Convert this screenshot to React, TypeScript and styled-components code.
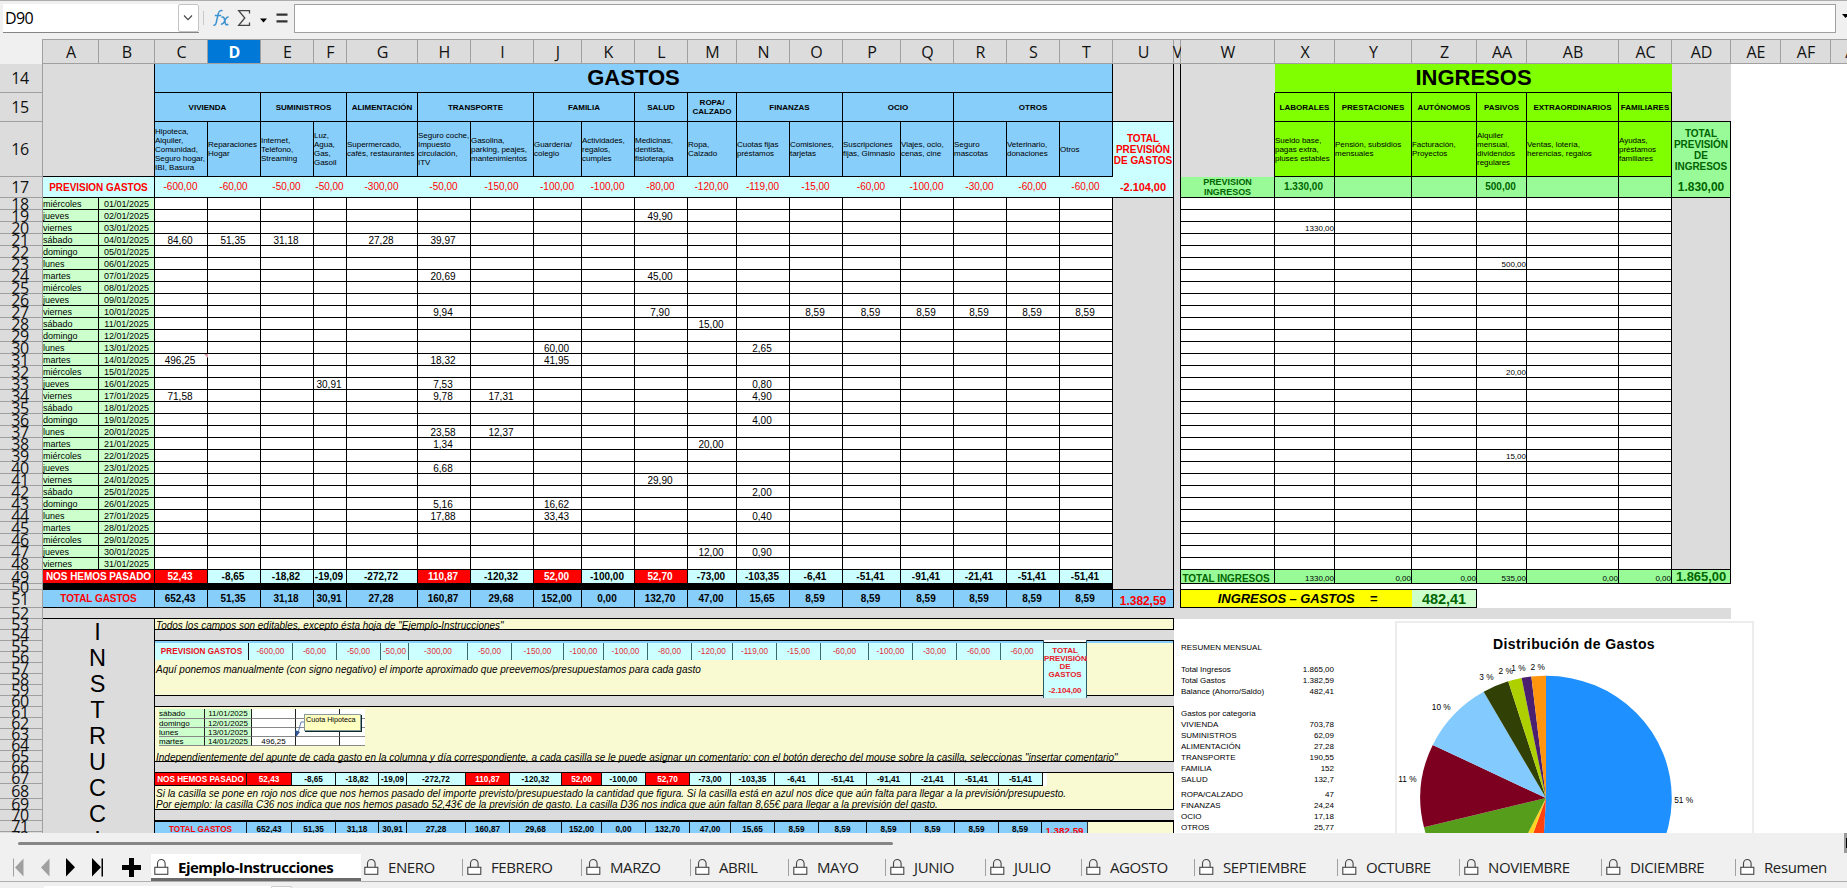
import React from 'react';
import styled, { createGlobalStyle, css } from 'styled-components';

const GlobalStyle = createGlobalStyle`
  * { box-sizing: border-box; }
  html, body { margin: 0; padding: 0; overflow: hidden; }
  body { background: #f0f0f0; font-family: "Liberation Sans", Arial, sans-serif; color: #000; }
`;

const UI_FONT = '"Open Sans", "Noto Sans", sans-serif';
const BLUE = '#87cefa';
const CYAN = '#ccffff';
const GRAY = '#dcdcdc';
const LIME = '#7fff00';
const MINT = '#98fb98';
const PALE_GREEN = '#ccffcc';
const RED = '#ff0000';
const DARK_GREEN = '#006400';
const NOTE = '#fafad2';

/* ---------- data ---------- */

const COLS: [string, number][] = [
  ['A', 56], ['B', 56], ['C', 53], ['D', 53], ['E', 53], ['F', 33], ['G', 71], ['H', 53], ['I', 63],
  ['J', 48], ['K', 53], ['L', 53], ['M', 49], ['N', 53], ['O', 53], ['P', 58], ['Q', 53], ['R', 53],
  ['S', 53], ['T', 53], ['U', 61], ['V', 7], ['W', 94], ['X', 60], ['Y', 77], ['Z', 65], ['AA', 50],
  ['AB', 92], ['AC', 53], ['AD', 59], ['AE', 50], ['AF', 50], ['AG', 50],
];

const ROW_HEIGHTS: [number, number][] = [
  [14, 29], [15, 29], [16, 55], [17, 21],
  ...Array.from({ length: 31 }, (_, i): [number, number] => [18 + i, 12]),
  [49, 14], [50, 6], [51, 18],
  ...Array.from({ length: 16 }, (_, i): [number, number] => [52 + i, 11]),
  [68, 15], [69, 11], [70, 11], [71, 11], [72, 11],
];

const GRID_COLUMNS = COLS.slice(0, 30).map(([, w]) => `${w}px`).join(' ');

const GROUPS: [string, number][] = [
  ['VIVIENDA', 2], ['SUMINISTROS', 2], ['ALIMENTACIÓN', 1], ['TRANSPORTE', 2], ['FAMILIA', 2], ['SALUD', 1],
  ['ROPA/\nCALZADO', 1], ['FINANZAS', 2], ['OCIO', 2], ['OTROS', 3],
];

const CONCEPTS = [
  'Hipoteca,\nAlquiler,\nComunidad,\nSeguro hogar,\nIBI, Basura', 'Reparaciones\nHogar', 'Internet,\nTeléfono,\nStreaming',
  'Luz,\nAgua,\nGas,\nGasoil', 'Supermercado,\ncafés, restaurantes', 'Seguro coche,\nImpuesto\ncirculación,\nITV',
  'Gasolina,\nparking, peajes,\nmantenimientos', 'Guardería/\ncolegio', 'Actividades,\nregalos,\ncumples',
  'Medicinas,\ndentista,\nfisioterapia', 'Ropa,\nCalzado', 'Cuotas fijas\npréstamos', 'Comisiones,\ntarjetas',
  'Suscripciones\nfijas, Gimnasio', 'Viajes, ocio,\ncenas, cine', 'Seguro\nmascotas', 'Veterinario,\ndonaciones', 'Otros',
];

const FORECAST = ['-600,00', '-60,00', '-50,00', '-50,00', '-300,00', '-50,00', '-150,00', '-100,00', '-100,00', '-80,00',
  '-120,00', '-119,00', '-15,00', '-60,00', '-100,00', '-30,00', '-60,00', '-60,00'];
const DEVIATION = ['52,43', '-8,65', '-18,82', '-19,09', '-272,72', '110,87', '-120,32', '52,00', '-100,00', '52,70',
  '-73,00', '-103,35', '-6,41', '-51,41', '-91,41', '-21,41', '-51,41', '-51,41'];
const TOTALS = ['652,43', '51,35', '31,18', '30,91', '27,28', '160,87', '29,68', '152,00', '0,00', '132,70', '47,00',
  '15,65', '8,59', '8,59', '8,59', '8,59', '8,59', '8,59'];

const WEEKDAYS = ['miércoles', 'jueves', 'viernes', 'sábado', 'domingo', 'lunes', 'martes'];
const EXPENSE_COLS = COLS.slice(2, 20).map(([n]) => n);
const INCOME_COLS = COLS.slice(22, 29).map(([n]) => n);

const ENTRIES: Record<number, Record<string, string>> = {
  19: { L: '49,90' },
  20: { X: '1330,00' },
  21: { C: '84,60', D: '51,35', E: '31,18', G: '27,28', H: '39,97' },
  23: { AA: '500,00' },
  24: { H: '20,69', L: '45,00' },
  27: { H: '9,94', L: '7,90', O: '8,59', P: '8,59', Q: '8,59', R: '8,59', S: '8,59', T: '8,59' },
  28: { M: '15,00' },
  30: { J: '60,00', N: '2,65' },
  31: { C: '496,25', H: '18,32', J: '41,95' },
  32: { AA: '20,00' },
  33: { F: '30,91', H: '7,53', N: '0,80' },
  34: { C: '71,58', H: '9,78', I: '17,31', N: '4,90' },
  36: { N: '4,00' },
  37: { H: '23,58', I: '12,37' },
  38: { H: '1,34', M: '20,00' },
  39: { AA: '15,00' },
  40: { H: '6,68' },
  41: { L: '29,90' },
  42: { N: '2,00' },
  43: { H: '5,16', J: '16,62' },
  44: { H: '17,88', J: '33,43', N: '0,40' },
  47: { M: '12,00', N: '0,90' },
};

const INCOME_GROUPS = ['LABORALES', 'PRESTACIONES', 'AUTÓNOMOS', 'PASIVOS', 'EXTRAORDINARIOS', 'FAMILIARES'];
const INCOME_CONCEPTS = ['Sueldo base,\npagas extra,\npluses estables', 'Pensión, subsidios\nmensuales', 'Facturación,\nProyectos',
  'Alquiler\nmensual,\ndividendos\nregulares', 'Ventas, lotería,\nherencias, regalos', 'Ayudas,\npréstamos\nfamiliares'];
const INCOME_FORECAST = ['1.330,00', '', '', '500,00', '', ''];
const INCOME_TOTALS = ['1330,00', '0,00', '0,00', '535,00', '0,00', '0,00'];

const SUMMARY: [string, string, number?][] = [
  ['', ''], ['', ''], ['RESUMEN MENSUAL', ''], ['', ''], ['Total Ingresos', '1.865,00'], ['Total Gastos', '1.382,59'],
  ['Balance (Ahorro/Saldo)', '482,41'], ['', ''], ['Gastos por categoría', ''], ['VIVIENDA', '703,78'],
  ['SUMINISTROS', '62,09'], ['ALIMENTACIÓN', '27,28'], ['TRANSPORTE', '190,55'], ['FAMILIA', '152'], ['SALUD', '132,7'],
  ['ROPA/CALZADO', '47', 15], ['FINANZAS', '24,24'], ['OCIO', '17,18'], ['OTROS', '25,77'],
];

const SLICES: [number, string][] = [
  [703.78, '#1e90ff'], [62.09, '#ff420e'], [27.28, '#ffd320'], [190.55, '#579d1c'], [152, '#7e0021'],
  [132.7, '#83caff'], [47, '#314004'], [24.24, '#aecf00'], [17.18, '#4b1f6f'], [25.77, '#ff950e'],
];

const TABS: [string, number][] = [
  ['Ejemplo-Instrucciones', 210], ['ENERO', 101], ['FEBRERO', 119], ['MARZO', 109], ['ABRIL', 98], ['MAYO', 97],
  ['JUNIO', 100], ['JULIO', 96], ['AGOSTO', 113], ['SEPTIEMBRE', 143], ['OCTUBRE', 122], ['NOVIEMBRE', 142],
  ['DICIEMBRE', 134], ['Resumen', 112],
];

/* ---------- formula bar ---------- */

const Window = styled.div`
  width: 1847px;
  height: 888px;
  display: flex;
  flex-direction: column;
  overflow: hidden;
  background: #f0f0f0;
`;

const FormulaBar = styled.div`
  height: 39px;
  flex: none;
  display: flex;
  align-items: flex-start;
  border-top: 1px solid #adadad;
  padding: 3px 0 0 3px;
  font-family: ${UI_FONT};
`;

const NameBox = styled.div`
  width: 196px;
  height: 29px;
  display: flex;
  justify-content: space-between;
  background: #fff;
  border-bottom: 1px solid #868686;
  font-size: 16px;
  line-height: 29px;
  padding-left: 2px;
  letter-spacing: -0.6px;
`;

const DropButton = styled.div`
  width: 21px;
  height: 28px;
  border: 1px solid #c4c4c4;
  border-radius: 2px;
  display: flex;
  align-items: center;
  justify-content: center;
`;

const Separator = styled.div`
  width: 1px;
  height: 14px;
  margin: 7px 9px 0 4px;
  background: #c8c8c8;
`;

const Tools = styled.svg`
  width: 82px;
  height: 29px;
  flex: none;
`;

const FormulaInput = styled.div`
  width: 1544px;
  height: 29px;
  margin-left: -1px;
  background: #fff;
  border: 1px solid #a0a0a0;
`;

const MoreCaret = styled.svg`
  margin: 10px 0 0 6px;
  flex: none;
`;

/* ---------- headers ---------- */

const ColumnHeaders = styled.div`
  height: 25px;
  flex: none;
  display: flex;
  padding-left: 42px;
`;

const ColumnHeader = styled.div<{ $w: number; $active?: boolean }>`
  width: ${p => p.$w}px;
  flex: none;
  display: flex;
  align-items: center;
  justify-content: center;
  border: solid #a0a0a0;
  border-width: 1px 1px 1px 0;
  background: ${p => (p.$active ? '#0078d7' : GRAY)};
  color: ${p => (p.$active ? '#fff' : '#111')};
  font: ${p => (p.$active ? 700 : 400)} 16px/22px ${UI_FONT};
  padding: 1px 0 0 1px;
  &:first-child { border-left-width: 1px; }
`;

const Sheet = styled.div`
  height: 769px;
  flex: none;
  display: flex;
  overflow: hidden;
  background: #fff;
`;

const RowHeaders = styled.div`
  width: 43px;
  flex: none;
  background: ${GRAY};
  border-right: 1px solid #a0a0a0;
`;

const RowHeader = styled.div<{ $h: number }>`
  height: ${p => p.$h}px;
  display: flex;
  align-items: center;
  justify-content: center;
  border-bottom: 1px solid #a0a0a0;
  padding-right: 2px;
  font: 16px/16px ${UI_FONT};
  letter-spacing: -0.5px;
  color: #111;
`;

const Content = styled.div`
  display: flex;
  flex-direction: column;
  flex: none;
`;

/* ---------- grid ---------- */

const Grid = styled.div`
  display: grid;
  grid-template-columns: ${GRID_COLUMNS};
  grid-template-rows: 29px 29px 55px 21px repeat(31, 12px) 14px 6px 18px 11px;
  flex: none;
`;

interface CellProps {
  $bg?: string;
  $cols?: number;
  $rows?: number;
  $lines?: 'both' | 'right' | 'bottom' | 'none';
}

const LINES = { both: '0 1px 1px 0', right: '0 1px 0 0', bottom: '0 0 1px 0', none: '0' };

const Cell = styled.div<CellProps>`
  grid-column: span ${p => p.$cols ?? 1};
  grid-row: span ${p => p.$rows ?? 1};
  min-width: 0;
  min-height: 0;
  background: ${p => p.$bg ?? '#fff'};
  border: solid #000;
  border-width: ${p => LINES[p.$lines ?? 'both']};
  display: flex;
  align-items: center;
  justify-content: center;
  white-space: pre;
  text-align: center;
  position: relative;
`;

const Title = styled(Cell)`
  font-size: 22px;
  font-weight: 700;
`;

const GroupCell = styled(Cell)`
  font-size: 8px;
  font-weight: 700;
  line-height: 9px;
`;

const ConceptCell = styled(Cell)`
  justify-content: flex-start;
  text-align: left;
  font-size: 8px;
  line-height: 9px;
  letter-spacing: -0.03px;
`;

const LabelCell = styled(Cell)<{ $color?: string; $size?: number; $lh?: number }>`
  font-size: ${p => p.$size ?? 10}px;
  font-weight: 700;
  line-height: ${p => p.$lh ?? 11}px;
  letter-spacing: -0.05px;
  color: ${p => p.$color ?? '#000'};
`;

const AmountCell = styled(Cell)<{ $color?: string; $bold?: boolean; $low?: boolean }>`
  font-size: 10px;
  line-height: 10px;
  padding-right: 2px;
  font-weight: ${p => (p.$bold ? 700 : 400)};
  color: ${p => p.$color ?? '#000'};
  ${p => p.$low && css`padding-top: 2px;`}
`;

const DayCell = styled(Cell)<{ $left?: boolean }>`
  font-size: 9px;
  line-height: 9px;
  padding-top: 2px;
  justify-content: ${p => (p.$left ? 'flex-start' : 'center')};
`;

const IncomeCell = styled(Cell)`
  justify-content: flex-end;
  align-items: flex-end;
  font-size: 8px;
  line-height: 8px;
`;

const BalanceCell = styled(LabelCell)`
  font-style: italic;
  gap: 15px;
  padding-left: 2px;
`;

const CommentMark = styled.i`
  position: absolute;
  right: -1px;
  top: 0;
  border: solid transparent;
  border-width: 0 4px 4px 0;
  border-right-color: #d59aa5;
`;

const BottomText = styled.span`
  padding-top: 5px;
`;

function DayRow({ row }: { row: number }) {
  const i = row - 18;
  const entries = ENTRIES[row] ?? {};
  return (
    <>
      <DayCell $bg={PALE_GREEN} $left>{WEEKDAYS[i % 7]}</DayCell>
      <DayCell $bg={PALE_GREEN}>{String(i + 1).padStart(2, '0')}/01/2025</DayCell>
      {EXPENSE_COLS.map(c => (
        <AmountCell key={c} $low>
          {entries[c]}
          {row === 31 && c === 'C' && <CommentMark />}
        </AmountCell>
      ))}
      {row === 18 && <Cell $bg={GRAY} $rows={33} />}
      {INCOME_COLS.map(c => <IncomeCell key={c}>{entries[c]}</IncomeCell>)}
      {row === 18 && <Cell $bg={GRAY} $rows={31} />}
    </>
  );
}

function MainGrid() {
  return (
    <Grid>
      <Cell $bg={GRAY} $cols={2} $rows={3} />
      <Title $bg={BLUE} $cols={18}>GASTOS</Title>
      <Cell $bg={GRAY} $rows={2} />
      <Cell $bg={GRAY} $rows={38} $lines="right" />
      <Cell $bg={GRAY} $lines="none" />
      <Title $bg={LIME} $cols={6} $lines="bottom">INGRESOS</Title>
      <Cell $bg={GRAY} $rows={2} $lines="bottom" />

      {GROUPS.map(([name, span]) => <GroupCell key={name} $bg={BLUE} $cols={span}>{name}</GroupCell>)}
      <Cell $bg={GRAY} $rows={2} $lines="right" />
      {INCOME_GROUPS.map(name => <GroupCell key={name} $bg={LIME}>{name}</GroupCell>)}

      {CONCEPTS.map(text => <ConceptCell key={text} $bg={BLUE}>{text}</ConceptCell>)}
      <LabelCell $bg={CYAN} $color={RED} $lines="right">{'TOTAL\nPREVISIÓN\nDE GASTOS'}</LabelCell>
      {INCOME_CONCEPTS.map(text => <ConceptCell key={text} $bg={LIME}>{text}</ConceptCell>)}
      <LabelCell $bg={MINT} $color={DARK_GREEN} $lines="right">{'TOTAL\nPREVISIÓN\nDE\nINGRESOS'}</LabelCell>

      <LabelCell $bg={CYAN} $cols={2} $color={RED}>PREVISION GASTOS</LabelCell>
      {FORECAST.map((v, i) => <AmountCell key={i} $bg={CYAN} $color={RED} $lines="bottom">{v}</AmountCell>)}
      <LabelCell $bg={CYAN} $color={RED} $size={11}>-2.104,00</LabelCell>
      <LabelCell $bg={MINT} $color={DARK_GREEN} $size={9} $lh={10}>{'PREVISION\nINGRESOS'}</LabelCell>
      {INCOME_FORECAST.map((v, i) => <AmountCell key={i} $bg={MINT} $color={DARK_GREEN} $bold>{v}</AmountCell>)}
      <LabelCell $bg={MINT} $color={DARK_GREEN} $size={12}>1.830,00</LabelCell>

      {Array.from({ length: 31 }, (_, i) => <DayRow key={i} row={18 + i} />)}

      <LabelCell $bg={RED} $cols={2} $color="#fff">NOS HEMOS PASADO</LabelCell>
      {DEVIATION.map((v, i) => (
        <AmountCell key={i} $bg={v[0] === '-' ? CYAN : RED} $color={v[0] === '-' ? '#000' : '#fff'} $bold>{v}</AmountCell>
      ))}
      <LabelCell $bg={MINT} $color={DARK_GREEN}><TotalIncomeText>TOTAL INGRESOS</TotalIncomeText></LabelCell>
      {INCOME_TOTALS.map((v, i) => <IncomeCell key={i} $bg={MINT}>{v}</IncomeCell>)}
      <LabelCell $bg={MINT} $color={DARK_GREEN} $size={13}>1.865,00</LabelCell>

      <Cell $bg="#000" $cols={20} />
      <Cell $cols={4} $lines="bottom" />
      <Cell $cols={4} $lines="none" />

      <LabelCell $bg={BLUE} $cols={2} $color={RED}>TOTAL GASTOS</LabelCell>
      {TOTALS.map((v, i) => <AmountCell key={i} $bg={BLUE} $bold>{v}</AmountCell>)}
      <LabelCell $bg={BLUE} $color={RED} $size={12} $lh={12}><BottomText>1.382,59</BottomText></LabelCell>
      <BalanceCell $bg="#ffff00" $cols={3} $size={13} $lh={16} $lines="bottom">
        <span>INGRESOS – GASTOS</span><span>=</span>
      </BalanceCell>
      <LabelCell $bg={PALE_GREEN} $color={DARK_GREEN} $size={14.5} $lh={16}>482,41</LabelCell>
      <Cell $cols={4} $lines="none" />

      <Cell $bg={GRAY} $cols={21} $lines="bottom" />
      <Cell $bg={GRAY} $cols={9} $lines="none" />
    </Grid>
  );
}

const TotalIncomeText = styled.span`
  padding: 3px 3px 0 0;
`;

/* ---------- instructions ---------- */

const Lower = styled.div`
  display: flex;
  height: 214px;
`;

const SideTitle = styled.div`
  width: 112px;
  flex: none;
  height: 214px;
  overflow: hidden;
  background: ${GRAY};
  border-right: 1px solid #000;
  text-align: center;
  white-space: pre;
  font-size: 23.5px;
  line-height: 26px;
  padding-right: 2px;
`;

const Notes = styled.div`
  width: 1019px;
  flex: none;
  background: ${GRAY};
  height: 214px;
`;

const Note = styled.div<{ $h: number }>`
  height: ${p => p.$h}px;
  background: ${NOTE};
  border: solid #000;
  border-width: 0 1px 1px 0;
  position: relative;
  display: flex;
  flex-direction: column;
`;

const Gap = styled.div`
  height: 11px;
  background: ${GRAY};
  border-bottom: 1px solid #000;
`;

const NoteText = styled.div<{ $top?: number }>`
  font-size: 10px;
  line-height: 11px;
  font-style: italic;
  white-space: pre;
  letter-spacing: -0.005px;
  padding: ${p => p.$top ?? 0}px 0 0 1px;
`;

const MiniTable = styled.div<{ $h: number; $top?: string }>`
  display: flex;
  height: ${p => p.$h}px;
  flex: none;
  overflow: hidden;
  border-top: ${p => p.$top ?? '0'};
`;

const MiniCell = styled.div<{ $w: number; $bg: string; $color?: string; $bold?: boolean; $line?: string }>`
  width: ${p => p.$w}px;
  flex: none;
  background: ${p => p.$bg};
  color: ${p => p.$color ?? '#000'};
  border-right: 1px solid ${p => p.$line ?? '#111'};
  font-size: 8.2px;
  font-weight: ${p => (p.$bold ? 700 : 400)};
  display: flex;
  align-items: center;
  justify-content: center;
  white-space: pre;
`;

const MiniTotal = styled.div`
  position: absolute;
  left: 888px;
  top: -1px;
  width: 44px;
  height: 58px;
  background: ${CYAN};
  color: #e8202a;
  border: solid #2a5a66;
  border-width: 0 1px;
  padding-top: 7px;
  font-size: 8px;
  line-height: 8px;
  letter-spacing: -0.1px;
  font-weight: 700;
  text-align: center;
  white-space: pre;
  box-shadow: inset 0 2px #fff, inset 0 3px #111;
`;

const Snapshot = styled.div`
  display: grid;
  grid-template-columns: 46px 47px 44px 44px 25px;
  grid-template-rows: 10px 9px 9px 9px;
  width: 206px;
  margin: 2px 0 0 4px;
  position: relative;
  flex: none;
`;

const SnapCell = styled.div<{ $green?: boolean; $center?: boolean }>`
  background: ${p => (p.$green ? PALE_GREEN : '#fff')};
  border-right: 1px solid #222;
  border-bottom: 1px solid #888;
  font-size: 8px;
  line-height: 9px;
  text-align: ${p => (p.$center ? 'center' : 'left')};
  &:nth-child(5n) { border-right: 0; }
`;

const Comment = styled.div`
  position: absolute;
  left: 145px;
  top: 5px;
  width: 57px;
  height: 17px;
  background: #ffffc0;
  border: 1px solid #8a9a9a;
  box-shadow: 1px 1px #0a2a30;
  font-size: 7.2px;
  line-height: 9px;
  padding-left: 1px;
  white-space: nowrap;
`;

const CommentArrow = styled.svg`
  position: absolute;
  left: 134px;
  top: 10px;
`;

const MINI_WIDTHS = [44, 44, 44, 28, 59, 44, 52, 40, 44, 44, 41, 44, 44, 48, 44, 44, 44, 43];
const MINI_WIDTHS_DEV = [45, 44, 43, 28, 59, 44, 52, 40, 44, 44, 41, 44, 44, 48, 44, 44, 44, 44];

const SNAP_DAYS: [string, string][] = [['sábado', '11/01/2025'], ['domingo', '12/01/2025'], ['lunes', '13/01/2025'], ['martes', '14/01/2025']];

const WhiteEdge = styled.div`
  width: 4px;
  background: #fff;
`;

const MiniSum = styled.div`
  width: 46px;
  background: ${BLUE};
  border-right: 1px solid #333;
  color: ${RED};
  font-size: 9.8px;
  font-weight: 700;
  line-height: 17px;
  text-align: center;
`;

const MiniRule = styled.div`
  width: 888px;
  height: 1px;
  margin-top: -1px;
  flex: none;
  background: #000;
`;

function Instructions() {
  return (
    <Notes>
      <Note $h={11}><NoteText $top={0.5}>Todos los campos son editables, excepto ésta hoja de "Ejemplo-Instrucciones"</NoteText></Note>
      <Gap />
      <Note $h={55}>
        <MiniTable $h={19} $top={`2px solid ${BLUE}`}>
          <MiniCell $w={94} $bg={CYAN} $color="#e8101a" $bold>PREVISION GASTOS</MiniCell>
          {FORECAST.map((v, i) => <MiniCell key={i} $w={MINI_WIDTHS[i]} $bg={CYAN} $color="#e0303a" $line="#3a6a70">{v}</MiniCell>)}
        </MiniTable>
        <NoteText $top={4}>Aquí ponemos manualmente (con signo negativo) el importe aproximado que preevemos/presupuestamos para cada gasto</NoteText>
        <MiniTotal>{'TOTAL\nPREVISIÓN\nDE\nGASTOS\n\n-2.104,00'}</MiniTotal>
      </Note>
      <Gap />
      <Note $h={55}>
        <Snapshot>
          {SNAP_DAYS.map(([d, date], i) => (
            <React.Fragment key={d}>
              <SnapCell $green>{d}</SnapCell>
              <SnapCell $green $center>{date}</SnapCell>
              <SnapCell $center>{i === 3 ? '496,25' : ''}</SnapCell>
              <SnapCell />
              <SnapCell />
            </React.Fragment>
          ))}
          <CommentArrow width="12" height="20" viewBox="0 0 12 20">
            <path d="M11 3H8L5 14" fill="none" stroke="#5b7fb0" />
            <path d="M2 11l5 2-4 5z" fill="#2f5597" />
          </CommentArrow>
          <Comment>Cuota Hipoteca</Comment>
        </Snapshot>
        <NoteText $top={5.5}>Independientemente del apunte de cada gasto en la columna y día correspondiente, a cada casilla se le puede asignar un comentario: con el botón derecho del mouse sobre la casilla, seleccionas "insertar comentario"</NoteText>
      </Note>
      <Gap />
      <Note $h={37}>
        <MiniTable $h={13}>
          <MiniCell $w={92} $bg={RED} $color="#fff" $bold>NOS HEMOS PASADO</MiniCell>
          {DEVIATION.map((v, i) => (
            <MiniCell key={i} $w={MINI_WIDTHS_DEV[i]} $bg={v[0] === '-' ? CYAN : RED} $color={v[0] === '-' ? '#000' : '#fff'} $bold>{v}</MiniCell>
          ))}
          <WhiteEdge />
        </MiniTable>
        <MiniRule />
        <NoteText $top={2}>Si la casilla se pone en rojo nos dice que nos hemos pasado del importe previsto/presupuestado la cantidad que figura. Si la casilla está en azul nos dice que aún falta para llegar a la previsión/presupuesto.</NoteText>
        <NoteText>Por ejemplo: la casilla C36 nos indica que nos hemos pasado 52,43€ de la previsión de gasto. La casilla D36 nos indica que aún faltan 8,65€ para llegar a la previsión del gasto.</NoteText>
      </Note>
      <Gap />
      <Note $h={24}>
        <MiniTable $h={16} $top="1px solid #000">
          <MiniCell $w={92} $bg={BLUE} $color={RED} $bold>TOTAL GASTOS</MiniCell>
          {TOTALS.map((v, i) => <MiniCell key={i} $w={i === 17 ? 43 : MINI_WIDTHS_DEV[i]} $bg={BLUE} $bold>{v}</MiniCell>)}
          <MiniSum>1.382,59</MiniSum>
        </MiniTable>
      </Note>
    </Notes>
  );
}

/* ---------- summary and chart ---------- */

const Summary = styled.div`
  width: 160px;
  flex: none;
  margin-left: 7px;
`;

const SummaryRow = styled.div<{ $h: number }>`
  width: 153px;
  height: ${p => p.$h}px;
  display: flex;
  justify-content: space-between;
  align-items: flex-end;
  font-size: 8px;
  line-height: 8px;
`;

const Chart = styled.svg`
  width: 359px;
  height: 212px;
  margin: 2px 0 0 54px;
  flex: none;
  font-family: "Liberation Sans", Arial, sans-serif;
`;

function slicePaths(cx: number, cy: number, rx: number, ry: number) {
  const total = SLICES.reduce((s, [v]) => s + v, 0);
  let acc = 0;
  return SLICES.map(([v, color]) => {
    const a = (acc / total) * 2 * Math.PI;
    acc += v;
    const b = (acc / total) * 2 * Math.PI;
    const big = b - a > Math.PI ? 1 : 0;
    const pt = (t: number) => `${(cx + rx * Math.sin(t)).toFixed(2)} ${(cy - ry * Math.cos(t)).toFixed(2)}`;
    return <path key={color} fill={color} d={`M${cx} ${cy}L${pt(a)}A${rx} ${ry} 0 ${big} 1 ${pt(b)}Z`} />;
  });
}

const CHART_LABELS: [string, number, number][] = [
  ['51 %', 1683.6, 803], ['11 %', 1407.5, 782], ['10 %', 1441.3, 710], ['3 %', 1486.4, 680], ['2 %', 1505.7, 674],
  ['1 %', 1518.4, 671], ['2 %', 1537.7, 670],
];

function PieChart() {
  return (
    <Chart viewBox="1395 621 359 212">
      <rect x="1396" y="622" width="357" height="240" fill="#fff" stroke="#ececec" strokeWidth="2" />
      <text x="1574" y="649" textAnchor="middle" fontSize="14" fontWeight="700" letterSpacing="0.4">Distribución de Gastos</text>
      {slicePaths(1546, 798, 125.7, 122.3)}
      {CHART_LABELS.map(([t, x, y], i) => <text key={i} x={x} y={y} fontSize="8.3" textAnchor="middle">{t}</text>)}
    </Chart>
  );
}

/* ---------- bottom bar ---------- */

const ScrollArea = styled.div`
  height: 21px;
  flex: none;
  display: flex;
  justify-content: space-between;
  padding-left: 18px;
`;

const ScrollThumb = styled.div`
  width: 875px;
  height: 3px;
  margin-top: 9px;
  border-radius: 2px;
  background: #868686;
`;

const CornerGrip = styled.div`
  width: 3px;
  height: 20px;
  border: solid #999;
  border-width: 5px 0 5px 2px;
  background: #000;
`;

const TabBar = styled.div`
  height: 28px;
  flex: none;
  display: flex;
  border-bottom: 1px solid #b0b0b0;
`;

const NavIcons = styled.svg`
  width: 151px;
  height: 27px;
  flex: none;
`;

const Tab = styled.div<{ $w: number; $active?: boolean }>`
  width: ${p => p.$w}px;
  height: 27px;
  flex: none;
  display: flex;
  align-items: flex-start;
  padding: 4px 0 0 3px;
  gap: 8px;
  background: ${p => (p.$active ? '#fff' : 'transparent')};
  border-bottom: ${p => (p.$active ? '3px solid #6b6b6b' : '0')};
  font: ${p => (p.$active ? 700 : 400)} 15px/18px ${UI_FONT};
  letter-spacing: ${p => (p.$active ? -0.5 : -0.4)}px;
  color: ${p => (p.$active ? '#000' : '#222')};
  white-space: nowrap;
`;

const TabDivider = styled.i`
  width: 1px;
  height: 17px;
  background: #a0a0a0;
  margin: 1px -4px 0 -3px;
`;

const LockIcon = styled.svg`
  width: 15px;
  height: 18px;
  flex: none;
`;

const TabText = styled.span`
  padding-left: 1px;
`;

const StatusBar = styled.div`
  flex: 1;
  display: flex;
  padding: 4px 0 0 44px;
`;

const StatusField = styled.div`
  width: 227px;
  background: #fff;
`;

const StatusButton = styled.div`
  width: 21px;
  border: 1px solid #ccc;
  border-bottom: 0;
  border-radius: 2px 2px 0 0;
  background: #fff;
`;

export default function App() {
  return (
    <Window>
      <GlobalStyle />
      <FormulaBar>
        <NameBox>
          D90
          <DropButton>
            <svg width="10" height="6" viewBox="0 0 10 6"><path d="M1 0.5L5 4.7L9 0.5" fill="none" stroke="#444" strokeWidth="1.1" /></svg>
          </DropButton>
        </NameBox>
        <Separator />
        <Tools viewBox="213 4 82 29">
          <path d="M222.5 10.8q-3.2-1-4.2 2.8l-2.2 9.4q-.7 2.7-2.8 2.1M214.8 15.6h6.4" fill="none" stroke="#3a93d0" strokeWidth="1.5" />
          <path d="M221.4 17.4q2-1.2 2.8 1l1.2 5q.7 2.2 2.9.9M228.6 17.2q-1.6-.7-3.2 2.1l-1.2 2.6q-1.4 2.7-3.2 2.2" fill="none" stroke="#3a93d0" strokeWidth="1.6" />
          <path d="M249.5 13.5V10.7H238.7L244.8 18L238.7 25.3H249.5V22.5" fill="none" stroke="#444" strokeWidth="1.3" />
          <path d="M260 18.5h7l-3.5 4z" fill="#000" />
          <path d="M276.5 14.7h11M276.5 21.3h11" stroke="#333" strokeWidth="2.2" />
        </Tools>
        <FormulaInput />
        <MoreCaret width="5" height="4" viewBox="0 0 5 4"><path d="M0 0h7L3.5 4z" /></MoreCaret>
      </FormulaBar>

      <ColumnHeaders>
        {COLS.map(([name, w], i) => (
          <ColumnHeader key={name} $w={i === 0 ? w + 1 : w} $active={name === 'D'}>{name}</ColumnHeader>
        ))}
      </ColumnHeaders>

      <Sheet>
        <RowHeaders>
          {ROW_HEIGHTS.map(([n, h]) => <RowHeader key={n} $h={h}>{n}</RowHeader>)}
        </RowHeaders>
        <Content>
          <MainGrid />
          <Lower>
            <SideTitle>{'I\nN\nS\nT\nR\nU\nC\nC\nI'}</SideTitle>
            <Instructions />
            <Summary>
              {SUMMARY.map(([label, value, h], i) => (
                <SummaryRow key={i} $h={h ?? 11}><span>{label}</span><span>{value}</span></SummaryRow>
              ))}
            </Summary>
            <PieChart />
          </Lower>
        </Content>
      </Sheet>

      <ScrollArea>
        <ScrollThumb />
        <CornerGrip />
      </ScrollArea>
      <TabBar>
        <NavIcons viewBox="0 854 151 27">
          <path d="M13.5 858.5v18" stroke="#a0a0a0" />
          <path d="M23.5 858.5v18L15 867.5zM49.5 858.5v18L41 867.5z" fill="#a0a0a0" />
          <path d="M66 858v18.5L75 867.3zM92 858v18.5L101 867.3zM101.5 858.5h1.5v18h-1.5z" fill="#000" />
          <path d="M122 867.5h19M131.5 858v19" stroke="#000" strokeWidth="5" />
        </NavIcons>
        {TABS.map(([name, w], i) => (
          <Tab key={name} $w={w} $active={i === 0}>
            {i > 1 && <TabDivider />}
            <LockIcon viewBox="0 0 15 18">
              <path d="M3.5 9V5.5a3.8 4 0 0 1 7.6 0V9" fill="none" stroke="#444" strokeWidth="1.1" />
              <rect x="0.8" y="9.3" width="13" height="7" fill="#fff" stroke="#444" strokeWidth="1.1" />
            </LockIcon>
            <TabText>{name}</TabText>
          </Tab>
        ))}
      </TabBar>
      <StatusBar>
        <StatusField />
        <StatusButton />
      </StatusBar>
    </Window>
  );
}
